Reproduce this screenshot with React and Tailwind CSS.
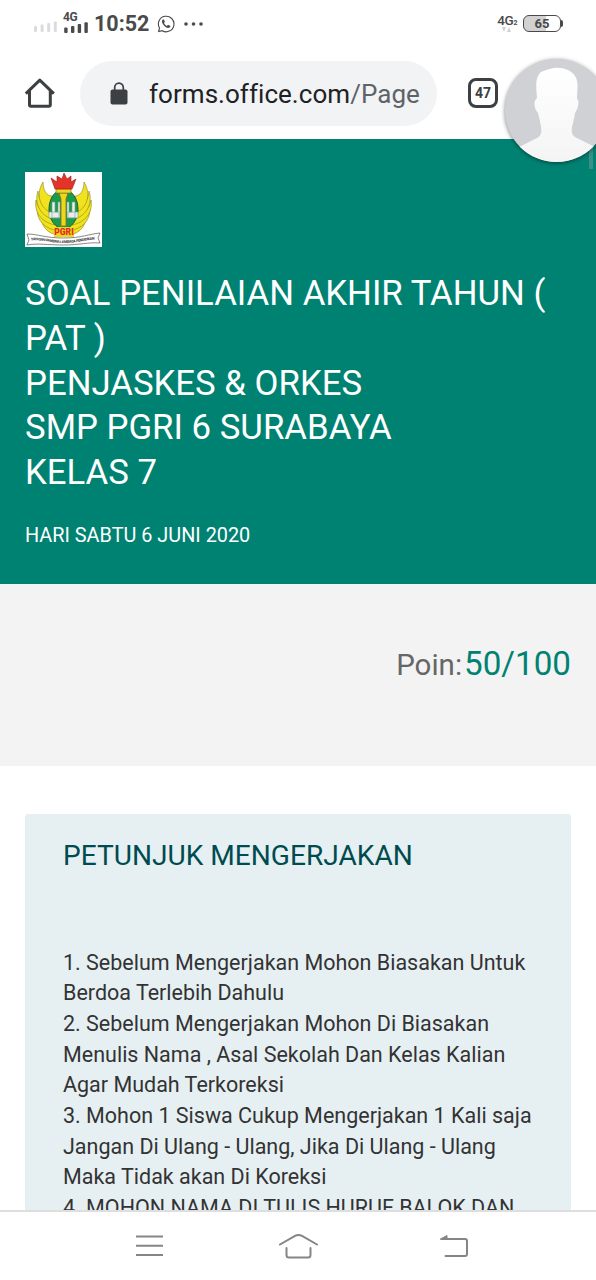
import React from 'react';

const titleLines = [
  'SOAL PENILAIAN AKHIR TAHUN (',
  'PAT )',
  'PENJASKES & ORKES',
  'SMP PGRI 6 SURABAYA',
  'KELAS 7',
];

const instructionLines = [
  '1. Sebelum Mengerjakan Mohon Biasakan Untuk',
  'Berdoa Terlebih Dahulu',
  '2. Sebelum Mengerjakan Mohon Di Biasakan',
  'Menulis Nama , Asal Sekolah Dan Kelas Kalian',
  'Agar Mudah Terkoreksi',
  '3. Mohon 1 Siswa Cukup Mengerjakan 1 Kali saja',
  'Jangan Di Ulang - Ulang, Jika Di Ulang - Ulang',
  'Maka Tidak akan Di Koreksi',
  '4. MOHON NAMA DI TULIS HURUF BALOK DAN',
];

function StatusBar() {
  return (
    <div className="flex h-[47px] items-center pl-[34px] pr-[33px] text-[#4a4a4a]">
      {/* Empty signal of the first SIM */}
      <svg className="mt-[7px] h-[12px] w-[24px]" viewBox="0 0 24 12" fill="#dcdcdc">
        <rect x="0" y="5" width="3" height="6" rx="1" />
        <rect x="6.6" y="3.5" width="3" height="7.5" rx="1" />
        <rect x="13.2" y="2" width="3" height="9" rx="1" />
        <rect x="19.8" y="0.5" width="3" height="10.5" rx="1" />
      </svg>
      <div className="ml-[5px] mt-[-1px] flex w-[26px] flex-col">
        <span className="h-[9px] text-[12px] font-bold leading-[9px] tracking-[-0.4px]">4G</span>
        <svg className="h-[12px] w-[26px]" viewBox="0 0 26 12" fill="#4a4a4a">
          <rect x="1.2" y="5.5" width="3.4" height="5.5" rx="1" />
          <rect x="8" y="4" width="3.4" height="7" rx="1" />
          <rect x="14.7" y="2" width="3.4" height="9" rx="1" />
          <rect x="21.4" y="0.3" width="3.4" height="10.7" rx="1" />
        </svg>
      </div>
      <span className="ml-[5px] w-[57px] whitespace-nowrap text-[21.5px] font-bold leading-6">10:52</span>
      <svg className="ml-[6px] h-[18px] w-[18px]" viewBox="0 0 18 18" fill="none" stroke="#4a4a4a" strokeWidth="1.1">
        <path d="M1.6 16.6 2.5 13A7.8 7.8 0 1 1 5.2 15.7Z" />
        <path d="M5.8 4.4C4.5 5.5 4.8 7.3 6 9.2c1.7 2.5 4.2 4.1 6 3.6 1.1-.3 1.5-1.4 1.4-1.9L11 9.7l-1.1 1.2C8.8 10.4 7.5 9.2 7 8l.9-1-.9-2.5Z" fill="#4a4a4a" stroke="none" />
      </svg>
      <svg className="ml-[9px] h-[4px] w-[19px]" viewBox="0 0 19 4" fill="#4a4a4a">
        <circle cx="2" cy="2" r="1.8" />
        <circle cx="9.5" cy="2" r="1.8" />
        <circle cx="17" cy="2" r="1.8" />
      </svg>

      <div className="ml-auto flex items-center">
        <div className="mt-[-1px] flex flex-col">
          <span className="h-[12px] whitespace-nowrap text-[13.5px] font-medium leading-[12px] tracking-[-0.4px]">4G<span className="text-[7px] font-bold">2</span></span>
          <svg className="ml-[5px] mt-[1px] h-[5px] w-[9px]" viewBox="0 0 9 5" fill="#d2d2d2">
            <path d="M0 0h4L2 5ZM5 5h4L7 0Z" />
          </svg>
        </div>
        <div className="ml-[6px] flex h-[17px] w-[38px] items-center justify-center rounded-[6px] border-[1.5px] border-[#4a4a4a] bg-linear-to-r from-[#d2d2d2] from-62% to-white to-62%">
          <span className="text-[13px] font-bold leading-none">65</span>
        </div>
        <div className="h-[7px] w-[2px] rounded-r bg-[#4a4a4a]" />
      </div>
    </div>
  );
}

function BrowserBar() {
  return (
    <div className="flex h-[92px] items-center pl-[24px]">
      <svg className="h-[32px] w-[32px]" viewBox="0 0 32 32" fill="none" stroke="#3c4043" strokeWidth="3" strokeLinejoin="round">
        <path d="M1.8 16.6 15.8 3.2 29.8 16.6M5.5 14v13.7q0 1.500 1.500 1.500h17.800q1.500 0 1.500-1.500V14" />
      </svg>
      <div className="ml-[24px] flex h-[65px] w-[357px] items-center rounded-full bg-[#f1f3f4] pl-[30px]">
        <svg className="h-[23px] w-[18px]" viewBox="0 0 18 23">
          <path d="M4.7 9V5.5a4.3 4.3 0 0 1 8.6 0V9" fill="none" stroke="#3c4043" strokeWidth="1.7" />
          <rect x="0.5" y="7.5" width="17" height="15" rx="2" fill="#3c4043" />
        </svg>
        <span className="ml-[21px] mt-[2px] whitespace-nowrap text-[26px] leading-8 tracking-[0.04px] text-[#202124]">
          forms.office.com<span className="text-[#5f6368]">/Page</span>
        </span>
      </div>
      <div className="ml-[31px] flex h-[30px] w-[30px] items-center justify-center rounded-[8px] border-[3px] border-[#3c4043] text-[14px] font-bold leading-none text-[#3c4043]">
        47
      </div>
    </div>
  );
}

// Floating profile head over the browser bar
function ProfileBubble() {
  return (
    <div className="absolute left-[505px] top-[59px] h-[103px] w-[103px] overflow-hidden rounded-full bg-[#d0d1d5] shadow-[0_1px_4px_rgba(0,0,0,0.5)]">
      <svg className="h-full w-full" viewBox="0 0 103 103">
        <defs>
          <linearGradient id="person" x1="0" y1="0" x2="0" y2="1">
            <stop offset="0" stopColor="#fff" />
            <stop offset="1" stopColor="#f4f4f4" />
          </linearGradient>
        </defs>
        <path
          d="M32 39C31 28 30 18 36 13 40 11 44 10 49 9 58 8 66 11 70 17 74 23 72 31 72 40 75 41 73 50 70 54 69 60 68 64 67 68 66 75 68 78 74 80L88 87 103 95V103H0V95L18 86 30 80C36 78 37 74 36 68 35 62 34 58 33 54 29 50 28 42 32 39Z"
          fill="url(#person)"
        />
      </svg>
    </div>
  );
}

// Feathers of one wing, drawn from the lowest one up
function Wing() {
  return (
    <g fill="#f0e31d" stroke="#8a8420" strokeWidth="0.6">
      <path d="M16 46C17 56 24 63 38 64L34 55C26 55 20 52 16 46Z" />
      <path d="M12 37C12 48 19 57 34 59L29 50C21 49 15 45 12 37Z" />
      <path d="M11 28C9 40 16 50 30 53L27 43C19 42 13 37 11 28Z" />
      <path d="M13 19C9 31 15 43 27 47L26 35C19 35 14 29 13 19Z" />
      <path d="M18 10C11 21 14 35 25 40L27 24C22 24 18 19 18 10Z" />
    </g>
  );
}

function SchoolLogo() {
  return (
    <svg className="h-[75px] w-[77px] bg-white" viewBox="0 0 77 75">
      <Wing />
      <g transform="translate(77 0) scale(-1 1)">
        <Wing />
      </g>
      <ellipse cx="38.5" cy="37" rx="14.5" ry="19.5" fill="#1b9b4c" stroke="#1e5e34" strokeWidth="1" />
      {/* Gates beside the torch */}
      <path d="M27 30h3v10h3V30h2v16h-8ZM42 30h2v10h3V30h3v16h-8ZM24 40h10v6H24ZM43 40h10v6H43Z" fill="#e9eeea" stroke="#7b9991" strokeWidth="0.6" />
      <path d="M34 21h9l-2 6v27h-5V27Z" fill="#f1d61e" stroke="#77731b" strokeWidth="0.8" />
      <path d="M31 17h15v4H31Z" fill="#f1d61e" stroke="#77731b" strokeWidth="0.6" />
      <path d="M30 17 26 6l6 4V4l5 3 2-6 3 6 4-3v6l5-3-4 10Z" fill="#e5332a" stroke="#8d2219" strokeWidth="0.6" />
      <path d="M29 55h20v10H29Z" fill="#f1d61e" />
      <text x="39" y="63" textAnchor="middle" fontSize="8.5" fontWeight="900" fill="#e02d22" fontFamily="Roboto, sans-serif">PGRI</text>
      {/* Motto ribbon */}
      <path d="M2 62c11 0 18 4 36.5 4S64 62 75 61l-2 5 2 5c-12-1-20 2-36.5 2S13 71 2 73l2-5Z" fill="#fff" stroke="#555" strokeWidth="0.7" />
      <path id="motto" d="M6 68.5c12-1 18 2.500 33 2.500s22-3.500 32-3.500" fill="none" />
      <text fontSize="3.7" fontWeight="700" fill="#333" fontFamily="Roboto, sans-serif">
        <textPath href="#motto" textLength="64">YAYASAN PEMBINA LEMBAGA PENDIDIKAN</textPath>
      </text>
    </svg>
  );
}

function NavBar() {
  return (
    <div className="flex h-[70px] shrink-0 items-center border-t-2 border-[#dedede] bg-white pb-px pl-[135px]">
      <svg className="h-[24px] w-[28px]" viewBox="0 0 28 24" fill="none" stroke="#858585" strokeWidth="2">
        <path d="M1 2.5h27M1 11.7h27M1 20.9h27" />
      </svg>
      <svg className="ml-[115px] h-[26px] w-[41px]" viewBox="0 0 41 26" fill="none" stroke="#858585" strokeWidth="2" strokeLinecap="round" strokeLinejoin="round">
        <path d="M2 11.5 17 2.8Q20.5 1 24 2.8L39 11.5M8.5 15v7q0 2.5 2.5 2.5h19q2.5 0 2.5-2.5v-7" />
      </svg>
      <svg className="ml-[120px] h-[24px] w-[31px]" viewBox="0 0 31 24" fill="none" stroke="#858585" strokeWidth="2" strokeLinecap="round" strokeLinejoin="round">
        <path d="M3 5h23q2 0 2 2v13q0 2-2 2H6.5" />
        <path d="M1.5 5 8 1.5V5Z" fill="#858585" strokeWidth="1" />
      </svg>
    </div>
  );
}

export default function App() {
  return (
    <div className="relative flex h-[1280px] w-[596px] flex-col overflow-hidden bg-white font-['Roboto',sans-serif]">
      <StatusBar />
      <BrowserBar />

      {/* Form header */}
      <header className="relative h-[444.5px] shrink-0 bg-[#008272] px-[25px] pt-[33px] text-white">
        <SchoolLogo />
        <h1 className="mt-[24px] text-[34.75px] leading-[44.75px]">
          {titleLines.map((line) => (
            <span key={line} className="block whitespace-nowrap">{line}</span>
          ))}
        </h1>
        <p className="mt-[27px] whitespace-nowrap text-[19.85px] leading-7">HARI SABTU 6 JUNI 2020</p>
        <div className="absolute right-[3px] top-0 h-[30px] w-[4px] bg-[#3c8f86]" />
      </header>

      {/* Score */}
      <section className="flex h-[182px] shrink-0 items-start justify-end bg-[#f3f3f3] pr-[25px] pt-[58px]">
        <div className="flex items-baseline whitespace-nowrap leading-[44px]">
          <span className="text-[29.5px] text-[#666666]">Poin:</span>
          <span className="ml-[2px] text-[33.2px] text-[#008272]">50/100</span>
        </div>
      </section>

      {/* Instructions */}
      <main className="min-h-0 flex-1 overflow-hidden px-[25px] pt-[48.5px]">
        <div className="h-[420px] rounded-t-[3px] bg-[#e6f0f3] pl-[38px] pt-[24px]">
          <h2 className="whitespace-nowrap text-[28.1px] leading-9 text-[#004b50]">PETUNJUK MENGERJAKAN</h2>
          <div className="mt-[73.5px] text-[21.5px] leading-[30.7px] text-[#333333]">
            {instructionLines.map((line) => (
              <p key={line} className="whitespace-nowrap">{line}</p>
            ))}
          </div>
        </div>
      </main>

      <NavBar />
      <ProfileBubble />
    </div>
  );
}
